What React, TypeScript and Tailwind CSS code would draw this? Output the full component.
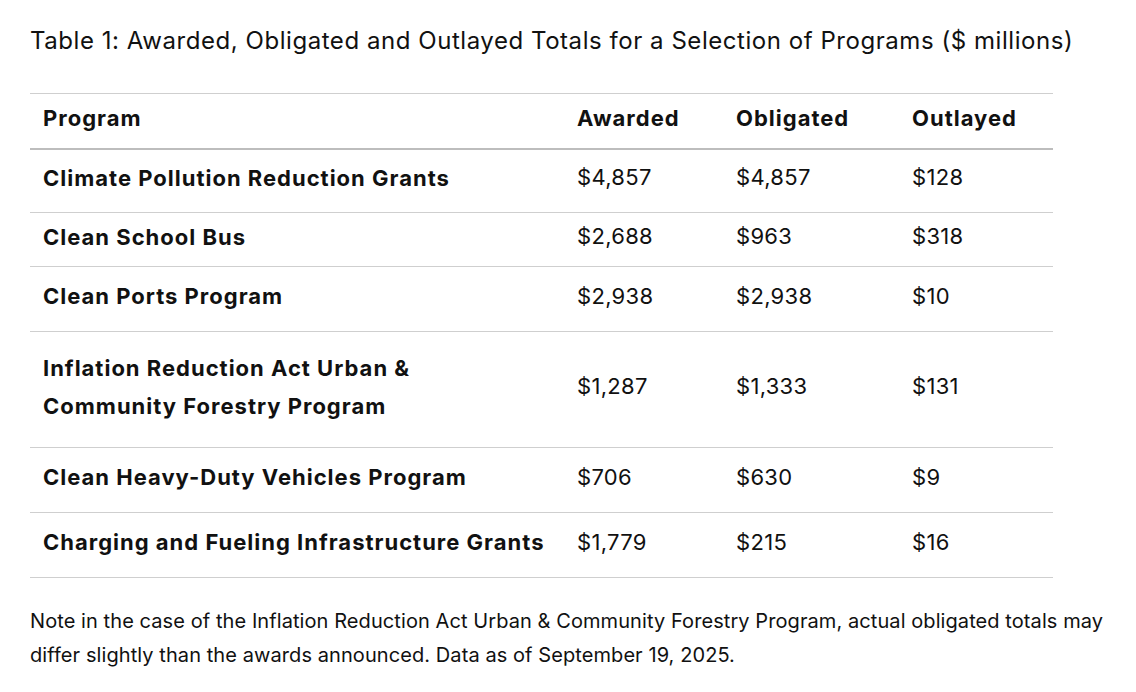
const rows = [
  { name: ['Climate Pollution Reduction Grants'], awarded: '$4,857', obligated: '$4,857', outlayed: '$128', h: 'h-[64px]' },
  { name: ['Clean School Bus'], awarded: '$2,688', obligated: '$963', outlayed: '$318', h: 'h-[54px]' },
  { name: ['Clean Ports Program'], awarded: '$2,938', obligated: '$2,938', outlayed: '$10', h: 'h-[65px]' },
  {
    name: ['Inflation Reduction Act Urban &', 'Community Forestry Program'],
    awarded: '$1,287',
    obligated: '$1,333',
    outlayed: '$131',
    h: 'h-[116px]',
  },
  { name: ['Clean Heavy-Duty Vehicles Program'], awarded: '$706', obligated: '$630', outlayed: '$9', h: 'h-[65px]' },
  { name: ['Charging and Fueling Infrastructure Grants'], awarded: '$1,779', obligated: '$215', outlayed: '$16', h: 'h-[65px]' },
];

const App = () => {
  return (
    <div className="min-h-[692px] bg-white px-[30px] pt-[24px] text-[#111] font-['Inter',sans-serif]">
      <h1 className="text-[24px] leading-[34px] tracking-[0.55px]">
        Table 1: Awarded, Obligated and Outlayed Totals for a Selection of Programs ($ millions)
      </h1>
      <table className="mt-[35px] w-[1023px] table-fixed border-collapse text-[22px]">
        <thead>
          <tr className="h-[55px] border-t border-b-2 border-t-[#cfcfcf] border-b-[#bdbdbd] font-bold tracking-[1px]">
            <th className="w-[547px] pl-[13px] pb-[4px] text-left">Program</th>
            <th className="w-[159px] pb-[4px] text-left">Awarded</th>
            <th className="w-[176px] pb-[4px] text-left">Obligated</th>
            <th className="pb-[4px] text-left">Outlayed</th>
          </tr>
        </thead>
        <tbody>
          {rows.map((r) => (
            <tr key={r.name[0]} className={`${r.h} border-b border-[#cfcfcf]`}>
              <td className="pl-[13px] pr-[4px] pb-[6px] font-bold leading-[38px] tracking-[1px] whitespace-nowrap">
                {r.name.map((line) => (
                  <div key={line}>{line}</div>
                ))}
              </td>
              <td className="pb-[6px] tracking-[0.3px]">{r.awarded}</td>
              <td className="pb-[6px] tracking-[0.3px]">{r.obligated}</td>
              <td className="pb-[6px] tracking-[0.3px]">{r.outlayed}</td>
            </tr>
          ))}
        </tbody>
      </table>
      <p className="mt-[26px] text-[20px] leading-[34px] tracking-[0.08px]">
        Note in the case of the Inflation Reduction Act Urban &amp; Community Forestry Program, actual obligated totals may
        differ slightly than the awards announced. Data as of September 19, 2025.
      </p>
    </div>
  );
};

export default App;
